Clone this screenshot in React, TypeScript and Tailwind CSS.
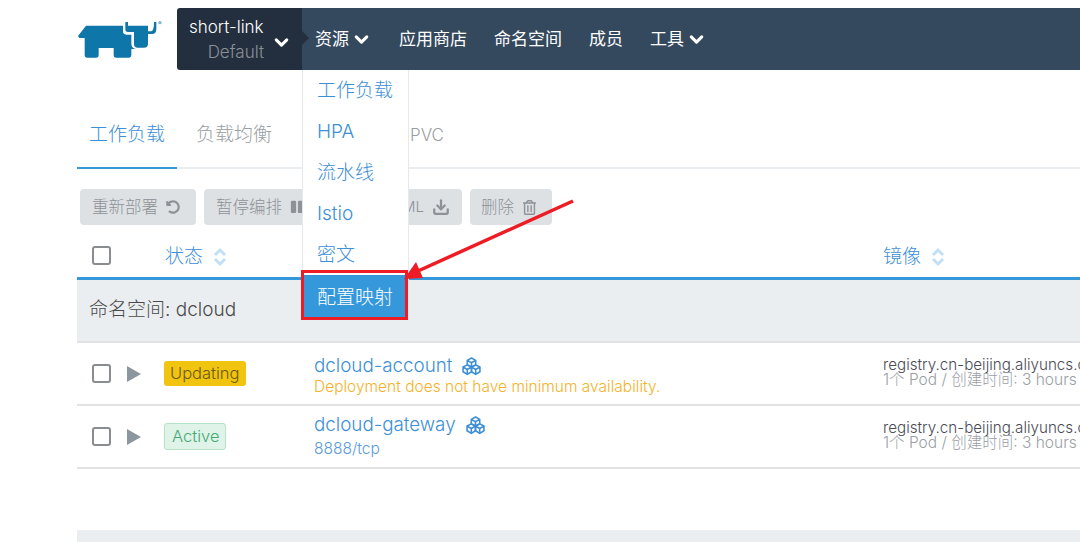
import { ChevronDown, Download } from "lucide-react";
import { FaPause, FaRegTrashAlt, FaUndoAlt } from "react-icons/fa";

const FONT = "font-['Inter','Noto_Sans_CJK_SC',sans-serif] font-light";

function Logo() {
  return (
    <svg width="96" height="52" viewBox="0 0 288 156" className="block" fill="#0e76a8">
      <path d="M18 72 L42 41 H153 V58 Q153 68 163 68 H178 V95 Q178 108 192 111 H178 V130 Q178 137 171 137 H132 Q125 137 125 130 V108 H80 V130 Q80 137 73 137 H45 Q38 137 38 130 V78 H22 Z" />
      <path d="M160 30 H168 V41 H228 V58 H238 Q246 56 246 30 H253 V52 Q253 66 240 66 H228 V95 Q228 107 216 107 H197 Q186 107 186 95 V60 H168 Q160 60 160 52 Z" />
      <circle cx="264" cy="32" r="5" fill="#7fb6d0" />
    </svg>
  );
}

function NavItem({ label, caret }: { label: string; caret?: boolean }) {
  return (
    <div className="flex items-center gap-[2px] pt-[1px] text-[17px] font-normal text-white">
      {label}
      {caret && <ChevronDown size={21} strokeWidth={3.5} />}
    </div>
  );
}

function SortIcon() {
  return (
    <svg width="14" height="20" viewBox="0 0 14 20" fill="none" stroke="#c3dff3" strokeWidth="3">
      <path d="M2 8 L7 3 L12 8 M2 12 L7 17 L12 12" />
    </svg>
  );
}

function Checkbox() {
  return <div className="h-[19px] w-[19px] rounded-[3px] border-2 border-[#8a8d90] bg-white" />;
}

function WorkloadIcon() {
  return (
    <svg width="19" height="19" viewBox="0 0 18 18" fill="none" stroke="#3d8fd6" strokeWidth="1.5" strokeLinejoin="round">
      <path d="M9 1 L13 3.2 V7.5 L9 9.5 L5 7.5 V3.2 Z M5 3.2 L9 5.4 L13 3.2 M9 5.4 V9.5" />
      <path d="M5 7.5 L9 9.5 V14 L5 16.5 L1 14 V9.5 Z M1 9.5 L5 11.8 L9 9.5 M5 11.8 V16.5" />
      <path d="M13 7.5 L17 9.5 V14 L13 16.5 L9 14 V9.5 Z M9 9.5 L13 11.8 L17 9.5 M13 11.8 V16.5" />
    </svg>
  );
}

type RowProps = {
  badge: string;
  badgeClass: string;
  name: string;
  sub: string;
  subClass: string;
  infoClass: string;
};

function Row({ badge, badgeClass, name, sub, subClass, infoClass }: RowProps) {
  return (
    <div className="flex h-[63px] items-center border-b-2 border-[#e0e2e4]">
      <div className="ml-[15px] w-[35px] shrink-0">
        <Checkbox />
      </div>
      <svg width="14" height="16" viewBox="0 0 14 16" className="mt-[1px] shrink-0">
        <path d="M0 0 L14 8 L0 16 Z" fill="#8b969e" />
      </svg>
      <div className="ml-[23px] w-[150px] shrink-0">
        <span className={`inline-block rounded-[3px] text-[16.5px] ${badgeClass}`}>{badge}</span>
      </div>
      <div className={`w-[569px] shrink-0 whitespace-nowrap ${infoClass}`}>
        <div className="flex items-center gap-[10px] text-[18.8px] leading-[22px] text-[#3d8fd6]">
          {name}
          <WorkloadIcon />
        </div>
        <div className={`text-[15.5px] ${subClass}`}>{sub}</div>
      </div>
      <div className="shrink-0 whitespace-nowrap pb-[3px]">
        <div className="text-[15.2px] leading-[15px] text-[#4a4a55]">registry.cn-beijing.aliyuncs.com</div>
        <div className="text-[15.5px] leading-[15px] text-[#9aa0a6]">1个 Pod / 创建时间: 3 hours ago</div>
      </div>
    </div>
  );
}

const menuItems = ["工作负载", "HPA", "流水线", "Istio", "密文"];

export default function App() {
  return (
    <div className={`relative h-[542px] w-[1080px] overflow-hidden bg-white pl-[77px] pt-2 ${FONT}`}>
      {/* top nav */}
      <div className="flex h-[62px] items-center">
        <div className="-ml-[5px] -mt-[2px] w-[105px]">
          <Logo />
        </div>
        <div className="flex h-full w-[125px] items-center rounded-l-[3px] bg-[#232f3e] pl-3 pr-[10px]">
          <div className="flex-1 pt-[2px] text-right">
            <div className="text-left text-[17px] leading-[25px] text-white">short-link</div>
            <div className="text-[17px] leading-[25px] text-[#8b9198]">Default</div>
          </div>
          <ChevronDown size={21} strokeWidth={3.5} className="ml-[7px] mt-[6px] text-white" />
        </div>
        <div className="relative flex h-full flex-1 items-center gap-[27px] bg-[#34495e] pl-[13px]">
          <div className="absolute left-0 top-[23px] h-0 w-0 border-y-[7px] border-l-[7px] border-y-transparent border-l-[#232f3e]" />
          <NavItem label="资源" caret />
          <NavItem label="应用商店" />
          <NavItem label="命名空间" />
          <NavItem label="成员" />
          <NavItem label="工具" caret />
        </div>
      </div>

      {/* tabs */}
      <div className="mt-[30px] flex h-[69px] border-b-2 border-[#ebeef0] text-[19px]">
        <div className="-mb-[2px] w-[100px] border-b-2 border-[#3498db] pl-3 pt-[21px] text-[#3d8fd6]">工作负载</div>
        <div className="ml-[19px] pt-[21px] text-[#9a9ea2]">负载均衡</div>
        <div className="ml-[138px] pt-[23px] text-[17px] text-[#9a9ea2]">PVC</div>
      </div>

      {/* actions */}
      <div className="ml-[3px] mt-[20px] flex gap-2 text-[16.5px] text-[#8d9296]">
        <div className="flex h-9 w-[116px] items-center gap-2 rounded-sm bg-[#dee1e4] pl-[12px]">
          重新部署
          <FaUndoAlt size={14} />
        </div>
        <div className="flex h-9 w-[258px] items-center gap-2 rounded-sm bg-[#dee1e4] pl-[12px]">
          暂停编排
          <FaPause size={14} />
          <span className="ml-auto text-[15px]">ML</span>
          <Download size={18} strokeWidth={3} className="mr-3" />
        </div>
        <div className="flex h-9 w-[82px] items-center gap-2 rounded-sm bg-[#dee1e4] pl-[11px]">
          删除
          <FaRegTrashAlt size={15} />
        </div>
      </div>

      {/* table head */}
      <div className="mt-[9px] flex h-[46px] items-center border-b-[3px] border-[#3498db] text-[19px] text-[#3d8fd6]">
        <div className="ml-[15px] w-[73px] shrink-0 pb-[1px]">
          <Checkbox />
        </div>
        <div className="flex w-[718px] shrink-0 items-center gap-[10px] pt-[3px]">
          状态
          <SortIcon />
        </div>
        <div className="flex shrink-0 items-center gap-[10px] pt-[3px]">
          镜像
          <SortIcon />
        </div>
      </div>

      {/* namespace group */}
      <div className="flex h-[63px] items-center border-b-2 border-[#e0e2e4] bg-[#ebeef0] pl-3 text-[19px] text-[#4a4a4a]">
        命名空间: dcloud
      </div>

      <Row
        badge="Updating"
        badgeClass="bg-[#f1c40f] px-[6px] leading-[25px] text-[#6b5a1a]"
        name="dcloud-account"
        sub="Deployment does not have minimum availability."
        subClass="leading-[20px] text-[#f3b229]"
        infoClass="pt-[5px]"
      />
      <Row
        badge="Active"
        badgeClass="border border-[#b5e2c8] bg-[#dff3e8] pl-[7px] pr-[6px] leading-[25px] text-[#45a872]"
        name="dcloud-gateway"
        sub="8888/tcp"
        subClass="mt-[3px] leading-[20px] text-[#5b9bd8]"
        infoClass=""
      />

      <div className="mt-[61px] h-3 bg-[#ebeef0]" />

      {/* open dropdown */}
      <div className="absolute left-[302px] top-[70px] w-[107px] border-x border-b border-[#e6e9eb] bg-white text-[#3d8fd6]">
        {menuItems.map((item) => (
          <div key={item} className="flex h-[41px] items-center pl-[14px] pt-[2px] text-[19px]">
            {item}
          </div>
        ))}
        <div className="flex h-[44px] items-center bg-[#3498db] pl-[14px] pt-[2px] text-[19px] text-white">配置映射</div>
      </div>

      {/* annotation */}
      <svg className="absolute left-0 top-0" width="1080" height="542" fill="none">
        <rect x="302.5" y="271.5" width="104" height="47" stroke="#ee1c25" strokeWidth="3" />
        <path d="M573 201 L418 271" stroke="#ee1c25" strokeWidth="3.5" />
        <path d="M404 279 L416 262 L423 278 Z" fill="#ee1c25" />
      </svg>
    </div>
  );
}
